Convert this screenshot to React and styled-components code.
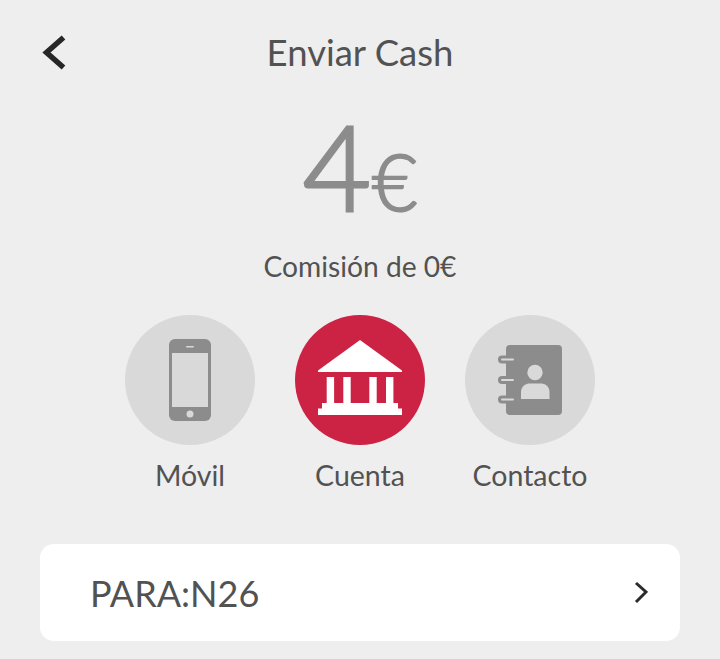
import React from 'react';
import styled, { createGlobalStyle } from 'styled-components';

const Global = createGlobalStyle`
  html, body { margin: 0; padding: 0; background: #eeeeee; }
  body { font-family: Lato, "Open Sans", sans-serif; }
`;
const Page = styled.div`
  width: 720px; height: 659px; overflow: hidden; background: #eeeeee;
  display: flex; flex-direction: column; color: #525252;
`;
const Header = styled.header`
  display: grid; grid-template-columns: 40px 1fr 40px; align-items: center;
  height: 106px; padding: 0 40px; box-sizing: border-box;
`;
const BackIcon = styled.svg`width: 30px; height: 40px; display: block;`;
const Title = styled.h1`
  margin: 0; text-align: center; font-size: 36.5px; font-weight: 400; line-height: 104px; height: 106px;
`;
const Amount = styled.div`
  display: flex; justify-content: center; align-items: baseline; color: #8c8c8c;
  font-weight: 300; height: 120px; line-height: 120px;
`;
const Whole = styled.span`font-size: 118px; -webkit-text-stroke: 3px #8c8c8c;`;
const Currency = styled.span`font-size: 78px; margin-left: 1px; -webkit-text-stroke: 2px #8c8c8c;`;
const Fee = styled.p`
  margin: 20px 0 0; text-align: center; font-size: 28.2px; line-height: 40px; height: 69px;
`;
const Options = styled.div`display: flex; justify-content: center; gap: 40px;`;
const Option = styled.div`display: flex; flex-direction: column; align-items: center; width: 130px;`;
const Circle = styled.div`
  width: 130px; height: 130px; border-radius: 50%;
  background: ${p => (p.$active ? '#cc2345' : '#d9d9d9')};
`;
const Glyph = styled.svg`width: 130px; height: 130px; display: block;`;
const Label = styled.span`
  font-size: 28.5px; line-height: 60px; height: 62px; white-space: nowrap;
`;
const Card = styled.div`
  margin: 37px 40px 0; height: 97px; background: #fff; border-radius: 14px;
  display: flex; align-items: center; justify-content: space-between;
  padding: 0 32px 0 50px; box-sizing: border-box;
`;
const CardText = styled.span`font-size: 36px; line-height: 99px; height: 97px;`;
const ChevronIcon = styled.svg`width: 14px; height: 24px; display: block; flex: none;`;

const Phone = () => (
  <Glyph viewBox="0 0 130 130">
    <rect x="44" y="24" width="42" height="82" rx="6" fill="#8c8c8c" />
    <rect x="47" y="38" width="36" height="54" fill="#d9d9d9" />
    <rect x="61" y="31" width="8" height="1.6" rx="0.8" fill="#d9d9d9" />
    <circle cx="65" cy="99" r="3.5" fill="#d9d9d9" />
  </Glyph>
);
const Bank = () => (
  <Glyph viewBox="0 0 130 130">
    <path d="M65 25 L107 55.5 V57 H23 V55.5 Z" fill="#fff" />
    <rect x="31.7" y="62" width="7.4" height="28" fill="#fff" />
    <rect x="48.3" y="62" width="7.4" height="28" fill="#fff" />
    <rect x="74.3" y="62" width="7.4" height="28" fill="#fff" />
    <rect x="91" y="62" width="7.4" height="28" fill="#fff" />
    <rect x="27" y="88" width="76" height="6" fill="#fff" />
    <rect x="23" y="93.5" width="84" height="6.5" fill="#fff" />
  </Glyph>
);
const Contact = () => (
  <Glyph viewBox="0 0 130 130">
    <rect x="41" y="30" width="56" height="70" rx="4" fill="#8c8c8c" />
    {[44.5, 65, 84.5].map(y => (
      <g key={y}>
        <line x1="37" y1={y} x2="46" y2={y} stroke="#8c8c8c" strokeWidth="8" strokeLinecap="round" />
        <line x1="37" y1={y} x2="48" y2={y} stroke="#d9d9d9" strokeWidth="2" strokeLinecap="round" />
      </g>
    ))}
    <circle cx="70" cy="57.5" r="7.7" fill="#d9d9d9" />
    <path d="M56 84 V77 C56 71 61 68.5 65 68.5 H75 C80 68.5 84.5 71 84.5 77 V84 Z" fill="#d9d9d9" />
  </Glyph>
);

export default function App() {
  return (
    <Page>
      <Global />
      <Header>
        <BackIcon viewBox="0 0 30 40">
          <path d="M23.5 4.5 L6.5 19.5 L23.5 34.5" fill="none" stroke="#262626" strokeWidth="5.5" />
        </BackIcon>
        <Title>Enviar Cash</Title>
        <span />
      </Header>
      <Amount>
        <Whole>4</Whole>
        <Currency>€</Currency>
      </Amount>
      <Fee>Comisión de 0€</Fee>
      <Options>
        <Option><Circle><Phone /></Circle><Label>Móvil</Label></Option>
        <Option><Circle $active><Bank /></Circle><Label>Cuenta</Label></Option>
        <Option><Circle><Contact /></Circle><Label>Contacto</Label></Option>
      </Options>
      <Card>
        <CardText>PARA:N26</CardText>
        <ChevronIcon viewBox="0 0 14 24">
          <path d="M2 2 L12 11 L2 21" fill="none" stroke="#2b2b2b" strokeWidth="3" />
        </ChevronIcon>
      </Card>
    </Page>
  );
}
